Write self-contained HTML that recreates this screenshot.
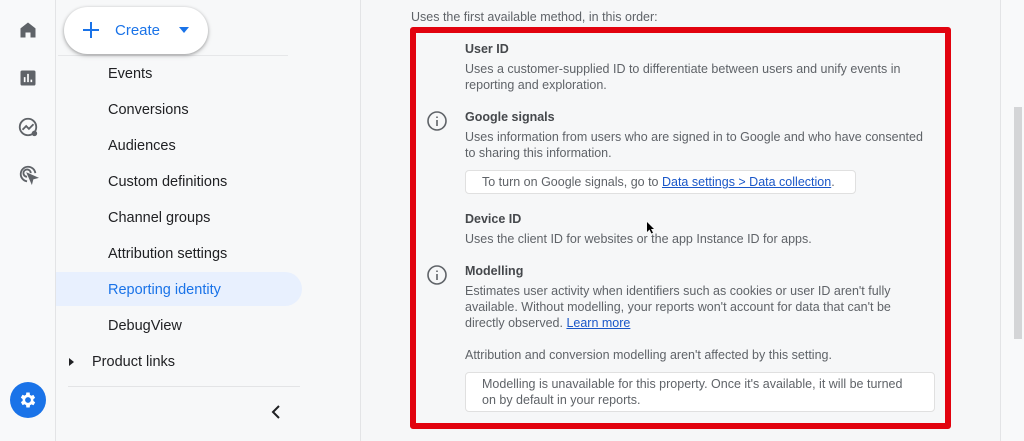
<!DOCTYPE html>
<html><head><meta charset="utf-8"><style>
*{margin:0;padding:0;box-sizing:border-box}
body{width:1024px;height:441px;overflow:hidden;background:#f8f9fa;font-family:"Liberation Sans",Arial,sans-serif;position:relative}
.abs{position:absolute}
.rail{left:0;top:0;width:56px;height:441px;background:#f8f9fa;border-right:1px solid #e3e4e6}
.nav{left:56px;top:0;width:305px;height:441px;background:#f7f8f9;border-right:1px solid #e3e4e6}
.item{position:absolute;left:108px;font-size:14.5px;color:#202124}
.content{left:361px;top:0;width:640px;height:441px;background:#f6f7f8;border-right:1px solid #e3e4e6}
.t{position:absolute;left:465px;font-size:12.5px;color:#5f6368;line-height:16px}
.h{position:absolute;left:465px;font-size:12.5px;color:#45484c;font-weight:bold}
a{color:#1a57c8;text-decoration:underline}
.box{position:absolute;left:465px;background:#fff;border:1px solid #e0e0e0;border-radius:4px;font-size:12.5px;color:#5f6368;line-height:16px;padding:0 16px}
</style></head><body>
<div class="abs rail"></div>
<div class="abs nav"></div>
<div class="abs content"></div>
<svg class="abs" style="left:18px;top:20px" width="20" height="20" viewBox="0 0 24 24"><path d="M12 3L3 10v11h6v-6h6v6h6V10z" fill="#5f6368"/></svg>
<svg class="abs" style="left:18px;top:68px" width="20" height="20" viewBox="0 0 24 24"><rect x="3" y="3" width="18" height="18" rx="2" fill="#5f6368"/><path d="M8 17V11M12 17V7M16 17v-3" stroke="#fff" stroke-width="2"/></svg>
<svg class="abs" style="left:17px;top:116px" width="22" height="22" viewBox="0 0 24 24" fill="none" stroke="#5f6368" stroke-width="2"><circle cx="12" cy="12" r="9"/><path d="M6 15l4-4 3 3 5-5"/><circle cx="19" cy="19" r="2" fill="#5f6368"/></svg>
<svg class="abs" style="left:17px;top:163px" width="22" height="22" viewBox="0 0 24 24" fill="none" stroke="#5f6368" stroke-width="2"><path d="M20 11a8 8 0 1 0-9 9"/><path d="M15 11a4 4 0 1 0-4 4"/><path d="M12 12l9 4-4 1-1 4z" fill="#5f6368"/></svg>
<div class="abs" style="left:10px;top:382px;width:36px;height:36px;border-radius:50%;background:#1a73e8"></div>
<svg class="abs" style="left:18px;top:390px" width="20" height="20" viewBox="0 0 24 24"><path fill="#fff" d="M19.4 13a7.5 7.5 0 0 0 0-2l2.1-1.6-2-3.5-2.5 1a7 7 0 0 0-1.7-1L15 3h-4l-.4 2.7a7 7 0 0 0-1.7 1l-2.5-1-2 3.5L6.6 11a7.5 7.5 0 0 0 0 2l-2.1 1.6 2 3.5 2.5-1a7 7 0 0 0 1.7 1L11 21h4l.4-2.7a7 7 0 0 0 1.7-1l2.5 1 2-3.5zM13 15.5a3.5 3.5 0 1 1 0-7 3.5 3.5 0 0 1 0 7z" transform="translate(-1 0)"/></svg>
<div class="abs" style="left:58px;top:55px;width:230px;height:1px;background:#e6e7e9"></div>
<div class="abs" style="left:64px;top:7px;width:144px;height:47px;border-radius:24px;background:#fff;box-shadow:0 1px 3px rgba(0,0,0,.3),0 2px 6px rgba(0,0,0,.12)"></div>
<svg class="abs" style="left:82px;top:21px" width="18" height="18" viewBox="0 0 18 18"><path d="M9 1v16M1 9h16" stroke="#1a73e8" stroke-width="2"/></svg>
<div class="abs" style="left:115px;top:22px;font-size:15px;color:#1a73e8">Create</div>
<svg class="abs" style="left:179px;top:27px" width="10" height="6"><path d="M0 0h10L5 6z" fill="#1a73e8"/></svg>
<div class="abs" style="left:56px;top:272px;width:246px;height:34px;background:#e8f0fe;border-radius:0 17px 17px 0"></div>
<div class="item" style="top:66px">Events</div>
<div class="item" style="top:102px">Conversions</div>
<div class="item" style="top:138px">Audiences</div>
<div class="item" style="top:174px">Custom definitions</div>
<div class="item" style="top:210px">Channel groups</div>
<div class="item" style="top:246px">Attribution settings</div>
<div class="item" style="top:282px;color:#1a73e8">Reporting identity</div>
<div class="item" style="top:318px">DebugView</div>
<svg class="abs" style="left:69px;top:358px" width="5" height="8"><path d="M0 0l5 4-5 4z" fill="#202124"/></svg>
<div class="item" style="top:354px;left:92px">Product links</div>
<div class="abs" style="left:68px;top:386px;width:232px;height:1px;background:#e3e4e6"></div>
<svg class="abs" style="left:271px;top:405px" width="10" height="14"><path d="M8 1L2 7l6 6" stroke="#202124" stroke-width="2" fill="none"/></svg>
<div class="abs" style="left:1014px;top:107px;width:8px;height:232px;background:#d4d5d7"></div>
<div class="t" style="left:411px;top:9px">Uses the first available method, in this order:</div>
<div class="abs" style="left:410px;top:27px;width:541px;height:402px;border:6px solid #e2030f;border-radius:3px"></div>
<div class="h" style="top:42px">User ID</div>
<div class="t" style="top:61px;width:470px">Uses a customer-supplied ID to differentiate between users and unify events in reporting and exploration.</div>
<svg class="abs" style="left:426px;top:110px" width="22" height="22" viewBox="0 0 22 22" fill="none" stroke="#5f6368" stroke-width="1.6"><circle cx="11" cy="11" r="9"/><path d="M11 10v6M11 6.5v1.5"/></svg>
<div class="h" style="top:110px">Google signals</div>
<div class="t" style="top:129px;width:470px">Uses information from users who are signed in to Google and who have consented to sharing this information.</div>
<div class="box" style="top:170px;width:391px;height:24px;line-height:22px">To turn on Google signals, go to <a>Data settings &gt; Data collection</a>.</div>
<div class="h" style="top:212px">Device ID</div>
<div class="t" style="top:231px">Uses the client ID for websites or the app Instance ID for apps.</div>
<svg class="abs" style="left:426px;top:264px" width="22" height="22" viewBox="0 0 22 22" fill="none" stroke="#5f6368" stroke-width="1.6"><circle cx="11" cy="11" r="9"/><path d="M11 10v6M11 6.5v1.5"/></svg>
<div class="h" style="top:264px">Modelling</div>
<div class="t" style="top:283px;width:450px">Estimates user activity when identifiers such as cookies or user ID aren't fully available. Without modelling, your reports won't account for data that can't be directly observed. <a>Learn more</a></div>
<div class="t" style="top:347px">Attribution and conversion modelling aren't affected by this setting.</div>
<div class="box" style="top:372px;width:470px;height:40px;padding-top:3px">Modelling is unavailable for this property. Once it's available, it will be turned on by default in your reports.</div>
<svg class="abs" style="left:646px;top:222px" width="8" height="12"><path d="M1 0v10l2.5-2.5 2 4 1.5-.7-2-3.8H8z" fill="#000"/></svg>
</body></html>
